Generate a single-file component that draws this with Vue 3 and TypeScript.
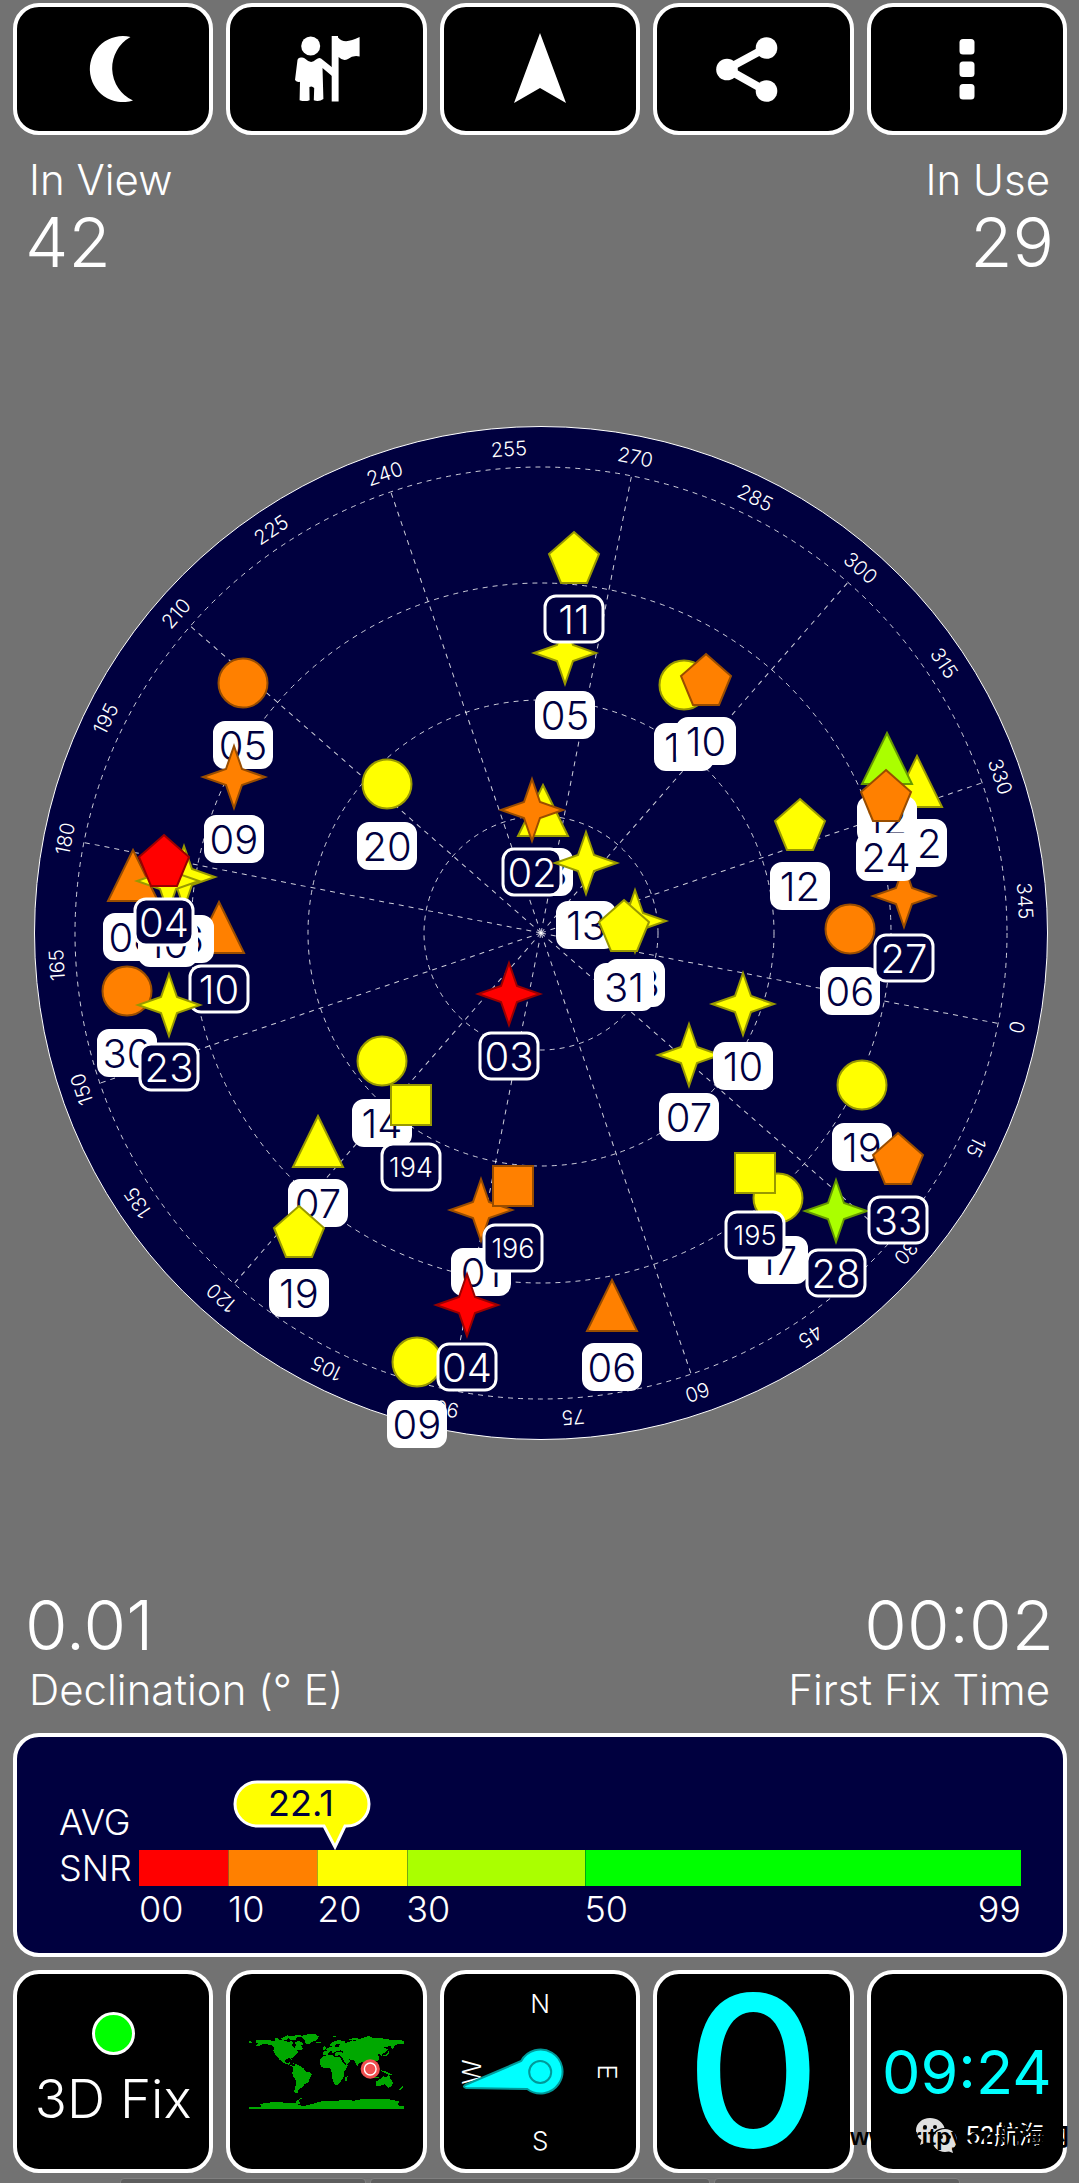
<script setup lang="ts">
type Shape = 'circle' | 'star' | 'triangle' | 'pentagon' | 'square'
type Tone = 'yellow' | 'orange' | 'red' | 'lime'

interface Satellite {
  shape: Shape
  tone: Tone
  x: number
  y: number
  id: string
  inUse: boolean
}

const sat = (shape: Shape, tone: Tone, x: number, y: number, id: string, inUse = true): Satellite => ({
  shape,
  tone,
  x,
  y,
  id,
  inUse,
})

/* Positions are measured from the zenith, in chart units. */
const satellites: Satellite[] = [
  sat('circle', 'orange', -298, -250, '05'),
  sat('circle', 'yellow', -154, -149, '20'),
  sat('circle', 'yellow', 143, -248, '13'),
  sat('circle', 'orange', 309, -4, '06'),
  sat('circle', 'yellow', 321, 152, '19'),
  sat('circle', 'yellow', 237, 265, '17'),
  sat('circle', 'orange', -414, 58, '30'),
  sat('circle', 'yellow', -159, 128, '14'),
  sat('circle', 'yellow', -124, 429, '09'),
  sat('triangle', 'orange', -408, -58, '08'),
  sat('triangle', 'orange', -322, -6, '10', false),
  sat('triangle', 'yellow', 2, -123, '03'),
  sat('triangle', 'yellow', 376, -152, '22'),
  sat('triangle', 'lime', 346, -175, '12'),
  sat('triangle', 'yellow', -223, 208, '07'),
  sat('triangle', 'orange', 71, 372, '06'),
  sat('star', 'orange', -307, -156, '09'),
  sat('star', 'yellow', -357, -56, '16'),
  sat('star', 'yellow', -373, -52, '10'),
  sat('star', 'yellow', 24, -280, '05'),
  sat('star', 'orange', -9, -123, '02', false),
  sat('star', 'yellow', 45, -70, '13'),
  sat('star', 'yellow', 94, -12, '08'),
  sat('star', 'yellow', 148, 122, '07'),
  sat('star', 'yellow', 202, 71, '10'),
  sat('star', 'orange', 363, -37, '27', false),
  sat('star', 'red', -32, 61, '03', false),
  sat('star', 'yellow', -372, 72, '23', false),
  sat('star', 'orange', -60, 277, '01'),
  sat('star', 'red', -74, 372, '04', false),
  sat('star', 'lime', 295, 278, '28', false),
  sat('square', 'yellow', -130, 172, '194', false),
  sat('square', 'orange', -28, 253, '196', false),
  sat('square', 'yellow', 214, 240, '195', false),
  sat('pentagon', 'red', -377, -73, '04', false),
  sat('pentagon', 'yellow', 33, -376, '11', false),
  sat('pentagon', 'orange', 165, -254, '10'),
  sat('pentagon', 'yellow', 259, -109, '12'),
  sat('pentagon', 'orange', 345, -138, '24'),
  sat('pentagon', 'yellow', 83, -8, '31'),
  sat('pentagon', 'yellow', -242, 298, '19'),
  sat('pentagon', 'orange', 357, 225, '33', false),
]

const outlines: Record<Exclude<Shape, 'circle'>, string> = {
  star: '0,-31 8,-8 31,0 8,8 0,31 -8,8 -31,0 -8,-8',
  triangle: '0,-25 25,26 -25,26',
  pentagon: '0,-25 25,-3 13,26 -13,26 -25,-3',
  square: '-20,-20 20,-20 20,20 -20,20',
}

const heading = 101.2
const rings = [117, 233, 350, 466]
const spokes = Array.from({ length: 12 }, (_, i) => i * 30)
const azimuths = Array.from({ length: 24 }, (_, i) => i * 15)

const snr = 22.1
const bands = [
  { from: 0, to: 10, label: '00', tone: 'b-red' },
  { from: 10, to: 20, label: '10', tone: 'b-orange' },
  { from: 20, to: 30, label: '20', tone: 'b-yellow' },
  { from: 30, to: 50, label: '30', tone: 'b-lime' },
  { from: 50, to: 99, label: '50', tone: 'b-green' },
]
</script>

<template>
  <main class="screen">
    <nav class="tiles toolbar">
      <button class="tile" type="button" aria-label="Night mode">
        <svg class="icon" viewBox="-40 -40 80 80">
          <path d="M17.500 -32A33 33 0 1 0 20 31.500A35.600 35.600 0 0 1 17.500 -32Z" />
        </svg>
      </button>
      <button class="tile" type="button" aria-label="Waypoint">
        <svg class="icon" viewBox="-40 -40 80 80">
          <circle cx="-16.300" cy="-23" r="9.500" />
          <path
            d="M-29.500 -9Q-29 -11.500 -26 -11.500Q-23 -12 -21.500 -10Q-16 -4.500 -11 -9.500Q-8 -12 -6 -10.500L5 -1.700V7L-4.500 -1L-3.600 30Q-8 33 -13.200 31.200L-12.800 19Q-15 16.500 -17.600 18L-17.400 31.200Q-22 33 -27.400 31.200L-27 12.700Q-30 13.500 -32 11Z"
          />
          <path d="M4.700 -33H11V-31.500Q17 -24 32.600 -32V-12.500Q26 -14 21 -10Q16 -7.500 11.600 -12V32.500H4.700Z" />
        </svg>
      </button>
      <button class="tile" type="button" aria-label="Navigate">
        <svg class="icon" viewBox="-40 -40 80 80"><path d="M0 -36L26 34L0 19L-26 34Z" /></svg>
      </button>
      <button class="tile" type="button" aria-label="Share">
        <svg class="icon" viewBox="-40 -40 80 80">
          <path class="wire" d="M13 -21L-26 0L13 22" />
          <circle cx="13.500" cy="-21" r="10.800" />
          <circle cx="-26" cy="0.500" r="10.800" />
          <circle cx="13.500" cy="22" r="10.800" />
        </svg>
      </button>
      <button class="tile" type="button" aria-label="Menu">
        <svg class="icon" viewBox="-40 -40 80 80">
          <rect x="-7.500" y="-30" width="15" height="15.500" rx="3.500" />
          <rect x="-7.500" y="-7.500" width="15" height="15.500" rx="3.500" />
          <rect x="-7.500" y="15" width="15" height="15.500" rx="3.500" />
        </svg>
      </button>
    </nav>

    <section class="stats upper">
      <div class="stat">
        <span class="caption">In View</span>
        <span class="figure">42</span>
      </div>
      <div class="stat end">
        <span class="caption">In Use</span>
        <span class="figure">29</span>
      </div>
    </section>

    <svg class="sky" viewBox="-541 -520 1079 1040" role="img" aria-label="Satellite positions">
      <circle class="disc" r="506.500" />
      <circle v-for="r in rings" :key="r" class="grid" :r="r" />
      <line v-for="a in spokes" :key="a" class="grid" y2="-466" :transform="`rotate(${a + heading})`" />
      <text v-for="a in azimuths" :key="a" class="azimuth" y="-478" :transform="`rotate(${a + heading})`">
        {{ a }}
      </text>
      <g v-for="(s, i) in satellites" :key="i" :transform="`translate(${s.x} ${s.y})`">
        <circle v-if="s.shape === 'circle'" class="mark" :class="s.tone" r="24.500" />
        <polygon v-else class="mark" :class="s.tone" :points="outlines[s.shape]" />
        <g class="tag" :class="{ idle: !s.inUse }">
          <rect x="-29" y="39" width="58" height="46" rx="11" />
          <text :class="{ small: s.id.length > 2 }" :y="s.id.length > 2 ? 72 : 77">{{ s.id }}</text>
        </g>
      </g>
    </svg>

    <section class="stats lower">
      <div class="stat">
        <span class="figure">0.01</span>
        <span class="caption">Declination (° E)</span>
      </div>
      <div class="stat end">
        <span class="figure">00:02</span>
        <span class="caption">First Fix Time</span>
      </div>
    </section>

    <section class="snr">
      <div class="snr-name">AVG<br />SNR</div>
      <div class="meter">
        <div class="pointer-track">
          <svg class="pointer" viewBox="0 0 138 70" :style="{ left: `${(snr / 99) * 100}%` }">
            <path
              d="M24 2H114A22 22 0 0 1 114 46H112L102 67L91 46H24A22 22 0 0 1 24 2Z"
            />
            <text x="68" y="36">{{ snr }}</text>
          </svg>
        </div>
        <div class="bands">
          <div v-for="b in bands" :key="b.from" class="band" :class="b.tone" :style="{ flexGrow: b.to - b.from }"></div>
        </div>
        <div class="scale">
          <span v-for="b in bands" :key="b.from" class="tick" :style="{ flexGrow: b.to - b.from }">{{ b.label }}</span>
          <span class="last">99</span>
        </div>
      </div>
    </section>

    <nav class="tiles gauges">
      <button class="tile fix" type="button">
        <span class="lamp"></span>
        <span class="fix-text">3D Fix</span>
      </button>
      <button class="tile" type="button" aria-label="World map">
        <svg class="map" viewBox="723 255 450 225" preserveAspectRatio="none">
          <g class="land">
            <path d="M742 274L762 272L790 275L820 273L838 279L846 275L852 283L846 289L855 297L860 289L856 280L866 277L874 290L881 300L870 304L862 303L868 309L858 318L852 325L845 328L848 334L841 328L830 329L828 338L834 342L842 340L840 347L848 349L852 354L846 352L836 346L822 342L810 330L800 318L794 306L795 294L788 289L776 286L762 286L750 292L744 290L750 284L742 281Z" />
            <path d="M723 276L736 280L723 282Z" />
            <path d="M796 270L806 266L812 272L800 274ZM816 268L834 259L842 262L870 257L878 261L862 266L858 272L846 274L838 268L828 274L818 273ZM858 274L874 278L882 286L872 288L864 280Z" />
            <path d="M876 266L872 261L895 256L916 256L926 263L920 274L906 279L896 286L888 284L884 272Z" />
            <path d="M918 279L932 279L930 283L920 283ZM960 261L982 261L972 264Z" />
            <path d="M846 341L858 345L868 348L858 347Z" />
            <path d="M850 352L862 348L872 351L882 359L886 367L898 370L906 376L900 386L896 399L884 406L878 414L868 421L864 432L857 433L854 427L858 410L860 394L852 384L848 372L852 362Z" />
            <path d="M938 322L954 317L966 318L970 324L988 325L994 338L1002 347L1012 347L1006 358L999 367L998 384L990 396L984 405L974 409L969 402L964 386L964 372L960 362L958 356L944 357L934 354L928 346L930 332Z" />
            <path d="M1003 385L1010 380L1007 396L1003 396Z" />
            <path d="M938 317L940 307L950 307L946 301L956 295L966 292L972 285L972 294L984 293L986 286L978 286L970 290L958 292L958 285L970 277L984 273L1000 277L1004 283L1014 278L1022 274L1030 276L1048 268L1070 261L1086 268L1110 268L1132 272L1160 273L1173 276L1173 284L1160 284L1146 290L1144 296L1138 302L1136 292L1126 291L1114 296L1126 300L1122 308L1110 314L1108 322L1100 314L1096 318L1102 325L1098 334L1088 338L1086 346L1078 350L1080 340L1072 344L1068 352L1060 340L1050 339L1042 344L1038 352L1032 341L1028 334L1018 332L1012 330L1018 338L1006 347L998 334L994 325L988 319L974 320L972 313L978 308L992 310L998 316L996 308L990 304L978 306L966 313L962 304L956 310L950 318Z" />
            <path d="M938 297L944 290L947 301L938 303Z" />
            <path d="M1040 275L1012 272L1030 266L1038 267ZM1130 285L1126 294L1120 285Z" />
            <path d="M1112 320L1122 316L1128 307L1130 312L1122 321Z" />
            <path d="M1106 364L1124 368L1138 377L1128 378L1112 369ZM1076 380L1102 385L1098 388L1082 385Z" />
            <path d="M1090 398L1104 390L1112 382L1122 384L1130 378L1134 390L1141 400L1136 414L1126 416L1118 406L1104 410L1093 410Z" />
            <path d="M1168 410L1171 414L1164 423L1158 422Z" />
            <path d="M723 473L758 473L756 465L770 462L800 459L830 461L858 461L862 455L874 447L880 446L866 456L874 462L866 467L880 471L900 467L915 462L935 457L962 457L1000 453L1030 455L1050 450L1100 451L1130 451L1160 457L1156 464L1158 471L1173 472V480H723Z" />
          </g>
          <ellipse class="halo" cx="1075" cy="360" rx="28" ry="29" />
          <ellipse class="here" cx="1075" cy="360" rx="17" ry="18" />
        </svg>
      </button>
      <button class="tile" type="button" aria-label="Compass">
        <svg class="compass" viewBox="-96 -98 192 195">
          <text y="-59">N</text>
          <text y="78">S</text>
          <text transform="rotate(90)" y="-58">E</text>
          <text transform="rotate(-90)" y="-59">W</text>
          <path d="M-19 -11A22 22 0 1 1 -13 17L-74 16Q-78 15 -75 13Z" />
          <circle r="11" />
        </svg>
      </button>
      <button class="tile speed" type="button">0</button>
      <button class="tile clock" type="button">09:24</button>
    </nav>

    <div class="dock">
      <span class="dock-tab"></span>
      <span class="dock-tab"></span>
      <span class="dock-tab"></span>
    </div>

    <div class="mark-white">
      <svg class="chat" viewBox="0 0 41 35">
        <path d="M14 0C6 0 0 5.500 0 12.500C0 16.500 2 20 5.500 22L4 27L10 24.500L15 25C14 15 21 10 28.500 10C27 4 21 0 14 0Z" />
        <path d="M29 11C22 11 16.500 16 16.500 22.500C16.500 29 22 34 29 34L33 33.500L37 35L36 31.500C39 29.500 41 26 41 22.500C41 16 36 11 29 11Z" />
        <g class="eye"><circle cx="9" cy="9" r="2" /><circle cx="19" cy="9" r="2" /><circle cx="25" cy="19" r="2" /><circle cx="33" cy="19" r="2" /></g>
      </svg>
      <span>52航海</span>
    </div>
    <div class="mark-black">www.ritpy.cn航海网</div>
  </main>
</template>

<style>
body {
  margin: 0;
  background: #727272;
}
</style>

<style scoped>
.screen {
  position: relative;
  box-sizing: border-box;
  min-height: 100vh;
  overflow: hidden;
  background: #727272;
  color: #fff;
  font-family: Inter, 'Liberation Sans', 'Noto Sans CJK SC', sans-serif;
  font-weight: 300;
}

.tiles {
  display: grid;
  grid-template-columns: repeat(5, minmax(0, 1fr));
  gap: 13px;
  padding: 0 12px 0 13px;
}

.toolbar {
  padding-top: 3px;
  grid-auto-rows: 132px;
}

.tile {
  display: flex;
  align-items: center;
  justify-content: center;
  box-sizing: border-box;
  margin: 0;
  padding: 0;
  border: 4px solid #fff;
  border-radius: 26px;
  background: #000;
  color: #fff;
  font: inherit;
}

.icon {
  width: 80px;
  height: 80px;
  fill: #fff;
}

.wire {
  fill: none;
  stroke: #fff;
  stroke-width: 8px;
}

.stats {
  display: flex;
  justify-content: space-between;
  padding: 0 25px;
}

.upper {
  margin-top: 19px;
}

.lower {
  margin-top: 136px;
}

.stat {
  display: flex;
  flex-direction: column;
}

.lower .stat {
  gap: 3px;
}

.end {
  align-items: flex-end;
}

.caption {
  padding: 0 4px;
  font-size: 42px;
  line-height: 52px;
}

.figure {
  font-size: 69px;
  line-height: 72px;
}

.sky {
  display: block;
  width: 100%;
  margin-top: 135px;
}

.disc {
  fill: #00003f;
  stroke: #fff;
  stroke-width: 1px;
}

.grid {
  fill: none;
  stroke: #fff;
  stroke-opacity: 0.8;
  stroke-width: 1px;
  stroke-dasharray: 5 5;
}

.azimuth {
  fill: #fff;
  font-size: 20px;
  text-anchor: middle;
}

.mark {
  stroke-width: 2px;
}

.yellow {
  fill: #ff0;
  stroke: #990;
}

.orange {
  fill: #ff8000;
  stroke: #994d00;
}

.red {
  fill: #f00;
  stroke: #900;
}

.lime {
  fill: #af0;
  stroke: #690;
}

.tag rect {
  fill: #fff;
  stroke: #fff;
  stroke-width: 2px;
}

.tag text {
  fill: #00003f;
  font-size: 40px;
  text-anchor: middle;
}

.idle rect {
  fill: #00003f;
}

.idle text {
  fill: #fff;
}

.tag .small {
  font-size: 27px;
}

.snr {
  display: grid;
  grid-template-columns: 80px minmax(0, 1fr);
  box-sizing: border-box;
  height: 224px;
  margin: 17px 12px 13px 13px;
  padding: 43px 42px 0;
  border: 4px solid #fff;
  border-radius: 26px;
  background: #00003f;
  font-size: 36px;
  line-height: 46px;
}

.snr-name {
  padding-top: 19px;
}

.pointer-track {
  position: relative;
  height: 70px;
}

.pointer {
  position: absolute;
  top: 0;
  width: 138px;
  height: 70px;
  margin-left: -103px;
}

.pointer path {
  fill: #ff0;
  stroke: #fff;
  stroke-width: 3px;
}

.pointer text {
  fill: #00003f;
  font-size: 36px;
  font-weight: 400;
  text-anchor: middle;
}

.bands,
.scale {
  display: flex;
}

.band {
  flex-basis: 0;
  box-sizing: border-box;
  height: 36px;
  border-left: 1px solid #00003f55;
}

.b-red {
  background: #f00;
  border-left: 0;
}

.b-orange {
  background: #ff8000;
}

.b-yellow {
  background: #ff0;
}

.b-lime {
  background: #af0;
}

.b-green {
  background: #0f0;
}

.scale {
  position: relative;
}

.tick {
  flex-basis: 0;
  min-width: 0;
}

.last {
  position: absolute;
  right: 0;
}

.gauges {
  grid-auto-rows: 203px;
}

.fix {
  flex-direction: column;
  gap: 12px;
}

.lamp {
  box-sizing: border-box;
  width: 43px;
  height: 43px;
  border: 3px solid #fff;
  border-radius: 50%;
  background: #0f0;
}

.fix-text {
  font-size: 53px;
  line-height: 64px;
}

.map {
  width: 155px;
  height: 75px;
  overflow: visible;
}

.land {
  fill: #00a800;
  shape-rendering: crispEdges;
}

.halo {
  fill: #f05050;
}

.here {
  fill: none;
  stroke: #fff;
  stroke-width: 4px;
}

.compass {
  width: 100%;
  height: 100%;
}

.compass text {
  fill: #fff;
  font-size: 26px;
  text-anchor: middle;
}

.compass path,
.compass circle {
  fill: #0ff;
  stroke: #099;
  stroke-width: 2px;
}

.speed {
  color: #0ff;
  font-size: 210px;
  font-weight: 500;
  line-height: 195px;
}

.clock {
  color: #0ff;
  font-size: 61px;
  font-weight: 400;
}

.dock {
  display: grid;
  grid-template-columns: 246fr 340fr 246fr;
  gap: 4px;
  height: 5px;
  margin: 5px 119px 0 120px;
  overflow: hidden;
}

.dock-tab {
  height: 20px;
  border: 1px solid #808080;
  border-radius: 4px;
  background: #5e5e5e;
}

.idle rect {
  stroke-width: 3px;
}

.mark-white,
.mark-black {
  position: absolute;
  font-family: 'Liberation Sans', 'Noto Sans CJK SC', sans-serif;
  white-space: nowrap;
}

.mark-white {
  right: 35px;
  bottom: 30px;
  display: flex;
  align-items: center;
  gap: 9px;
  font-size: 25px;
  font-weight: 400;
  line-height: 36px;
}

.chat {
  width: 41px;
  height: 35px;
  fill: #e0e0e0;
}

.eye {
  fill: #000;
}

.mark-black {
  right: 10px;
  bottom: 28px;
  color: #000;
  font-size: 24px;
  font-weight: 700;
  line-height: 36px;
}
</style>
